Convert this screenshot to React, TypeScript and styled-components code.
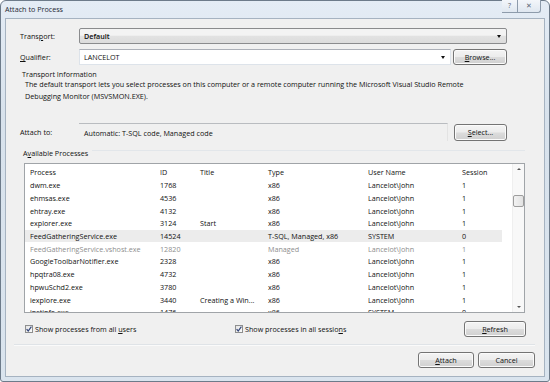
import React from "react";
import styled, { createGlobalStyle } from "styled-components";

interface ProcessRow {
  name: string;
  id: string;
  title: string;
  type: string;
  user: string;
  session: string;
  selected?: boolean;
  dim?: boolean;
}

const processes: ProcessRow[] = [
  { name: "dwm.exe", id: "1768", title: "", type: "x86", user: "Lancelot\\John", session: "1" },
  { name: "ehmsas.exe", id: "4536", title: "", type: "x86", user: "Lancelot\\John", session: "1" },
  { name: "ehtray.exe", id: "4132", title: "", type: "x86", user: "Lancelot\\John", session: "1" },
  { name: "explorer.exe", id: "3124", title: "Start", type: "x86", user: "Lancelot\\John", session: "1" },
  {
    name: "FeedGatheringService.exe",
    id: "14524",
    title: "",
    type: "T-SQL, Managed, x86",
    user: "SYSTEM",
    session: "0",
    selected: true,
  },
  {
    name: "FeedGatheringService.vshost.exe",
    id: "12820",
    title: "",
    type: "Managed",
    user: "Lancelot\\John",
    session: "1",
    dim: true,
  },
  { name: "GoogleToolbarNotifier.exe", id: "2328", title: "", type: "x86", user: "Lancelot\\John", session: "1" },
  { name: "hpqtra08.exe", id: "4732", title: "", type: "x86", user: "Lancelot\\John", session: "1" },
  { name: "hpwuSchd2.exe", id: "3780", title: "", type: "x86", user: "Lancelot\\John", session: "1" },
  { name: "iexplore.exe", id: "3440", title: "Creating a Win...", type: "x86", user: "Lancelot\\John", session: "1" },
  { name: "instinfo.exe", id: "1476", title: "", type: "x86", user: "SYSTEM", session: "0" },
];

export default function App() {
  return (
    <>
      <GlobalStyle />
      <Window>
        <TitleBar>
          <TitleText>Attach to Process</TitleText>
          <CaptionButton $width={16}>?</CaptionButton>
          <CaptionButton $width={23}>✕</CaptionButton>
        </TitleBar>

        <Client>
          <TopForm>
            <Label>
              Trans<u>p</u>ort:
            </Label>
            <DropList>
              <span>Default</span>
              <Arrow />
            </DropList>
            <Label>
              <u>Q</u>ualifier:
            </Label>
            <ControlRow $gap={2} $button={54}>
              <EditCombo>
                <span>LANCELOT</span>
                <Arrow />
              </EditCombo>
              <Button>
                <span>
                  <u>B</u>rowse...
                </span>
              </Button>
            </ControlRow>
          </TopForm>

          <InfoHeading>Transport Information</InfoHeading>
          <InfoText>
            The default transport lets you select processes on this computer or a remote computer running the
            Microsoft Visual Studio Remote
            <br />
            Debugging Monitor (MSVSMON.EXE).
          </InfoText>

          <AttachForm>
            <Label>Attach to:</Label>
            <ControlRow $gap={6} $button={53}>
              <ReadOnlyField>Automatic: T-SQL code, Managed code</ReadOnlyField>
              <Button $height={17}>
                <span>
                  <u>S</u>elect...
                </span>
              </Button>
            </ControlRow>
          </AttachForm>

          <GroupHeader>
            <span>
              A<u>v</u>ailable Processes
            </span>
            <GroupLine />
          </GroupHeader>

          <ListBox>
            <Table>
              <HeaderRow>
                <span>Process</span>
                <span>ID</span>
                <span>Title</span>
                <span>Type</span>
                <span>User Name</span>
                <span>Session</span>
              </HeaderRow>
              {processes.map((p) => (
                <DataRow key={p.name + p.id} $selected={p.selected} $dim={p.dim}>
                  <span>{p.name}</span>
                  <span>{p.id}</span>
                  <span>{p.title}</span>
                  <span>{p.type}</span>
                  <span>{p.user}</span>
                  <span>{p.session}</span>
                </DataRow>
              ))}
            </Table>
            <ScrollBar>
              <ScrollArrow $up />
              <ScrollTrack>
                <Thumb />
              </ScrollTrack>
              <ScrollArrow />
            </ScrollBar>
          </ListBox>

          <OptionsRow>
            <CheckLabel $width={210}>
              <CheckBox />
              <span>
                Show processes from all <u>u</u>sers
              </span>
            </CheckLabel>
            <CheckLabel>
              <CheckBox />
              <span>
                Show processes in all sessio<u>n</u>s
              </span>
            </CheckLabel>
            <Button $width={62}>
              <span>
                <u>R</u>efresh
              </span>
            </Button>
          </OptionsRow>

          <Separator />

          <DialogButtons>
            <Button $width={56}>
              <span>
                <u>A</u>ttach
              </span>
            </Button>
            <Button $width={57}>Cancel</Button>
          </DialogButtons>
        </Client>
      </Window>
    </>
  );
}

function CheckBox() {
  return (
    <Box>
      <svg width="8" height="8" viewBox="0 0 8 8">
        <path d="M1.6 4.2 L3.2 6 L6.4 1.6" fill="none" stroke="#34467a" strokeWidth="1.2" />
      </svg>
    </Box>
  );
}

const GlobalStyle = createGlobalStyle`
  html, body {
    margin: 0;
    padding: 0;
    background: #ffffff;
  }
  body {
    font-family: "Open Sans", "Noto Sans", sans-serif;
    font-size: 7.2px;
    color: #111;
  }
  u {
    text-underline-offset: 1px;
  }
`;

const Window = styled.div`
  width: 550px;
  height: 382px;
  box-sizing: border-box;
  display: flex;
  flex-direction: column;
  border: 1px solid #6d7b8a;
  border-radius: 6px 6px 3px 3px;
  background: linear-gradient(#e4ecf5, #d8e2ec 30%, #dae4ee);
`;

const TitleBar = styled.div`
  height: 17px;
  display: flex;
  align-items: flex-start;
  padding: 0 8px 0 4px;
`;

const TitleText = styled.div`
  flex: 1;
  line-height: 17px;
  color: #1e2833;
`;

const CaptionButton = styled.div<{ $width: number }>`
  width: ${(p) => p.$width}px;
  height: 13px;
  margin-top: -1px;
  box-sizing: border-box;
  border: 1px solid #8d9bab;
  border-top: none;
  border-left-width: 0;
  &:first-of-type {
    border-left-width: 1px;
    border-bottom-left-radius: 3px;
  }
  &:last-child {
    border-bottom-right-radius: 3px;
  }
  background: linear-gradient(#f3f6fa, #dfe7f0);
  color: #5b6775;
  font-size: 7px;
  line-height: 12px;
  text-align: center;
`;

const Client = styled.div`
  flex: 1;
  margin: 0 4px 4px;
  border: 1px solid #a6b3c1;
  background: #f0f0f0;
  display: flex;
  flex-direction: column;
`;

const TopForm = styled.div`
  margin: 9px 37px 0 14px;
  display: grid;
  grid-template-columns: 59px 1fr;
  row-gap: 5px;
  align-items: center;
`;

const Label = styled.div`
  line-height: 10px;
`;

const ControlRow = styled.div<{ $gap: number; $button: number }>`
  display: grid;
  grid-template-columns: 1fr ${(p) => p.$button}px;
  column-gap: ${(p) => p.$gap}px;
  align-items: center;
`;

const Arrow = styled.i`
  width: 0;
  height: 0;
  border-left: 2.5px solid transparent;
  border-right: 2.5px solid transparent;
  border-top: 3px solid #111;
`;

const DropList = styled.div`
  height: 16px;
  box-sizing: border-box;
  border: 1px solid #8a8b8d;
  border-radius: 2px;
  background: linear-gradient(#f3f3f3 45%, #e2e2e2 50%, #dcdcdc);
  display: flex;
  align-items: center;
  justify-content: space-between;
  padding: 0 5px 0 4px;
  font-weight: 600;
`;

const EditCombo = styled.div`
  height: 16px;
  box-sizing: border-box;
  border: 1px solid #dde3ea;
  border-top-color: #acb0b8;
  background: #fff;
  display: flex;
  align-items: center;
  justify-content: space-between;
  padding: 0 5px 0 4px;
`;

const Button = styled.div<{ $width?: number; $height?: number }>`
  ${(p) => (p.$width ? `width: ${p.$width}px;` : "")}
  height: ${(p) => p.$height ?? 16}px;
  box-sizing: border-box;
  border: 1px solid #747474;
  border-radius: 3px;
  background: linear-gradient(#f4f4f4, #ececec 48%, #dcdcdc 52%, #d0d0d0);
  box-shadow: inset 0 0 0 1px #fbfbfb;
  display: flex;
  align-items: center;
  justify-content: center;
`;

const InfoHeading = styled.div`
  margin: 5px 0 0 16px;
  line-height: 8px;
`;

const InfoText = styled.div`
  margin: 0 0 0 19px;
  line-height: 12px;
`;

const AttachForm = styled.div`
  margin: 21px 37px 0 14px;
  display: grid;
  grid-template-columns: 59px 1fr;
  align-items: center;
`;

const ReadOnlyField = styled.div`
  height: 18px;
  box-sizing: border-box;
  border-top: 1px solid #b9bcc0;
  border-right: 1px solid #e3e3e3;
  display: flex;
  align-items: center;
  padding-left: 5px;
`;

const GroupHeader = styled.div`
  margin: 7px 19px 0 17px;
  display: flex;
  align-items: flex-start;
  line-height: 10px;
`;

const GroupLine = styled.div`
  flex: 1;
  height: 1px;
  margin: 2px 0 0 4px;
  background: #e2e6ea;
`;

const ListBox = styled.div`
  margin: 5px 19px 0 18px;
  height: 150px;
  box-sizing: border-box;
  border: 1px solid #a0a4a8;
  background: #fff;
  display: flex;
  overflow: hidden;
`;

const Table = styled.div`
  flex: 1;
  overflow: hidden;
`;

const columns = "130px 40px 68px 100px 94px 40px";

const HeaderRow = styled.div`
  display: grid;
  grid-template-columns: ${columns};
  padding-left: 5px;
  height: 15px;
  align-items: center;
  white-space: nowrap;
`;

const DataRow = styled.div<{ $selected?: boolean; $dim?: boolean }>`
  display: grid;
  grid-template-columns: ${columns};
  width: 477px;
  padding-left: 5px;
  box-sizing: border-box;
  height: 12.7px;
  align-items: center;
  white-space: nowrap;
  background: ${(p) => (p.$selected ? "#ececec" : "transparent")};
  color: ${(p) => (p.$dim ? "#8e8e8e" : "#111")};
`;

const ScrollBar = styled.div`
  width: 11px;
  display: flex;
  flex-direction: column;
  background: #f8f8f8;
  border-left: 1px solid #efefef;
`;

const ScrollArrow = styled.div<{ $up?: boolean }>`
  height: 10px;
  display: flex;
  align-items: center;
  justify-content: center;
  &::before {
    content: "";
    border-left: 2px solid transparent;
    border-right: 2px solid transparent;
    ${(p) => (p.$up ? "border-bottom: 2px solid #555;" : "border-top: 2px solid #555;")}
  }
`;

const ScrollTrack = styled.div`
  flex: 1;
`;

const Thumb = styled.div`
  margin: 21px 0 0 0;
  height: 12px;
  box-sizing: border-box;
  border: 1px solid #9d9d9d;
  border-radius: 2px;
  background: linear-gradient(90deg, #f2f2f2, #e2e2e2);
`;

const OptionsRow = styled.div`
  margin: 8px 18px 0 19px;
  height: 16px;
  display: flex;
  align-items: center;
`;

const CheckLabel = styled.label<{ $width?: number }>`
  display: flex;
  align-items: center;
  gap: 2px;
  ${(p) => (p.$width ? `width: ${p.$width}px;` : "flex: 1;")}
  line-height: 10px;
`;

const Box = styled.span`
  width: 8px;
  height: 8px;
  box-sizing: border-box;
  border: 1px solid #8e8f8f;
  background: linear-gradient(135deg, #e4e4e4, #fcfcfc);
  display: flex;
  align-items: center;
  justify-content: center;
  svg {
    margin: -1px;
  }
`;

const Separator = styled.div`
  margin: 7px 9px 0 8px;
  height: 1px;
  background: #dfe3e7;
  border-bottom: 1px solid #fafafa;
`;

const DialogButtons = styled.div`
  margin: 6px 9px 0 0;
  display: flex;
  justify-content: flex-end;
  gap: 4px;
`;
